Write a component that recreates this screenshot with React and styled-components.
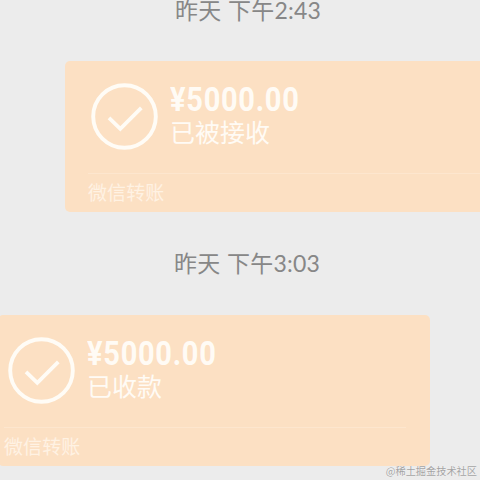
import React from 'react';
import styled, { createGlobalStyle } from 'styled-components';

const CARD_WIDTH = '432px';

const GlobalStyle = createGlobalStyle`
  body {
    margin: 0;
    background: #ececec;
    font-family: "Noto Sans CJK SC", sans-serif;
  }
`;

const Chat = styled.main`
  position: relative;
  display: flex;
  flex-direction: column;
  box-sizing: border-box;
  width: 480px;
  height: 480px;
  overflow: hidden;
  background: #ececec;
`;

const Time = styled.time`
  display: block;
  flex: none;
  height: 30px;
  margin-top: ${(props) => props.$top};
  padding-left: ${(props) => props.$left};
  color: #878787;
  font-family: Lato, "Noto Sans CJK SC", sans-serif;
  font-size: 23px;
  line-height: 28px;
  letter-spacing: 0.2px;
  word-spacing: 0.6px;
  white-space: pre;
`;

const Bubble = styled.section`
  display: flex;
  flex: none;
  flex-direction: column;
  box-sizing: border-box;
  width: ${CARD_WIDTH};
  height: 151px;
  margin-top: ${(props) => props.$top};
  margin-left: ${(props) => (props.$mine ? '65px' : '-2px')};
  padding: 22px ${(props) => (props.$mine ? '0 0 26px' : '24px 0 10px')};
  border-radius: 5px;
  background: #fce0c3;
  color: #fffbf5;
`;

const Body = styled.div`
  display: flex;
  gap: 12px;
  height: 90px;
`;

const StatusIcon = styled.svg`
  flex: none;
  width: 67px;
  height: 67px;
  fill: none;
  stroke: #fffcf6;
`;

const Info = styled.div`
  display: flex;
  flex-direction: column;
`;

const Amount = styled.strong`
  height: 33px;
  font-family: Roboto, sans-serif;
  font-size: 33px;
  font-weight: 700;
  line-height: 34px;
  letter-spacing: 0.8px;
  white-space: nowrap;
  transform: scaleX(0.88);
  transform-origin: left center;
`;

const Status = styled.span`
  font-size: 25px;
  line-height: 31px;
  white-space: nowrap;
`;

const Source = styled.footer`
  height: 37px;
  margin-left: ${(props) => (props.$mine ? '-3px' : '-4px')};
  border-top: 1px solid #fde6ce;
  color: #fff2e3;
  font-size: 19px;
  line-height: 35px;
  letter-spacing: 0.1px;
`;

const Watermark = styled.span`
  position: absolute;
  right: 3px;
  bottom: 0;
  color: #a3a3a3;
  font-size: 10.2px;
  line-height: 18px;
  text-shadow: 0 0 1px #fff;
  white-space: nowrap;
`;

const Transfer = ({
  mine,
  top,
  amount,
  status,
}) => (
  <Bubble $mine={mine} $top={top}>
    <Body>
      <StatusIcon viewBox="0 0 67 67">
        <circle cx="33.5" cy="33.5" r="31.3" strokeWidth="3.9" />
        <path d="M18 34.8 29.3 45.8 50.3 24.9" strokeWidth="3.8" />
      </StatusIcon>
      <Info>
        <Amount>{amount}</Amount>
        <Status>{status}</Status>
      </Info>
    </Body>
    <Source $mine={mine}>微信转账</Source>
  </Bubble>
);

const App = () => (
  <>
    <GlobalStyle />
    <Chat>
      <Time $top="-4px" $left="175px">昨天 下午2:43</Time>
      <Transfer mine top="35px" amount="¥5000.00" status="已被接收" />
      <Time $top="37px" $left="174px">昨天 下午3:03</Time>
      <Transfer top="36px" amount="¥5000.00" status="已收款" />
      <Watermark>@稀土掘金技术社区</Watermark>
    </Chat>
  </>
);

export default App;
